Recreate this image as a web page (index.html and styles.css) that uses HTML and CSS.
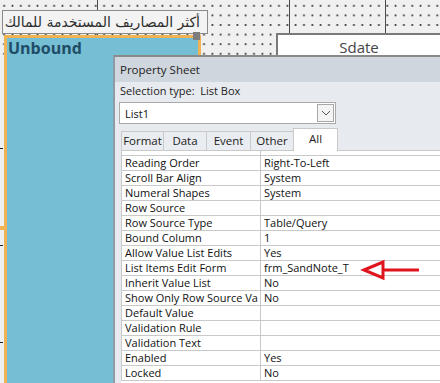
FILE: index.html
```html
<!DOCTYPE html>
<html lang="en">

<head>
  <meta charset="UTF-8">
  <meta name="viewport" content="width=device-width, initial-scale=1.0">
  <title>Property Sheet</title>
  <link rel="stylesheet" href="styles.css">
</head>

<body>
  <div class="designer">
    <div class="header-band"></div>
    <div class="guide guide-1"></div>
    <div class="guide guide-2"></div>
    <div class="guide guide-3"></div>

    <div class="ar-label" dir="rtl">أكثر المصاريف المستخدمة للمالك</div>
    <div class="unbound">Unbound</div>
    <div class="handle"></div>
    <div class="sdate">Sdate</div>

    <div class="tick tick-1"></div>
    <div class="tick tick-2"></div>
    <div class="tick tick-3"></div>
    <div class="side-grip"></div>
  </div>

  <div class="prop-sheet">
    <div class="ps-title">Property Sheet</div>
    <div class="ps-sel">Selection type:&nbsp;&nbsp;List Box</div>
    <div class="ps-combo">
      <span class="ps-combo-text">List1</span>
      <span class="ps-combo-btn">
        <svg width="10" height="6" viewBox="0 0 10 6"><path d="M1 1 L5 5 L9 1" fill="none" stroke="#555" stroke-width="1"/></svg>
      </span>
    </div>
    <div class="ps-tabs">
      <div class="tab">Format</div>
      <div class="tab">Data</div>
      <div class="tab">Event</div>
      <div class="tab">Other</div>
      <div class="tab active">All</div>
    </div>
    <div class="ps-grid">
      <div class="ps-rows">
        <div class="row"><div class="name"></div><div class="val"></div></div>
        <div class="row"><div class="name">Reading Order</div><div class="val">Right-To-Left</div></div>
        <div class="row"><div class="name">Scroll Bar Align</div><div class="val">System</div></div>
        <div class="row"><div class="name">Numeral Shapes</div><div class="val">System</div></div>
        <div class="row"><div class="name">Row Source</div><div class="val"></div></div>
        <div class="row"><div class="name">Row Source Type</div><div class="val">Table/Query</div></div>
        <div class="row"><div class="name">Bound Column</div><div class="val">1</div></div>
        <div class="row"><div class="name">Allow Value List Edits</div><div class="val">Yes</div></div>
        <div class="row"><div class="name">List Items Edit Form</div><div class="val">frm_SandNote_T</div></div>
        <div class="row"><div class="name">Inherit Value List</div><div class="val">No</div></div>
        <div class="row"><div class="name">Show Only Row Source Va</div><div class="val">No</div></div>
        <div class="row"><div class="name">Default Value</div><div class="val"></div></div>
        <div class="row"><div class="name">Validation Rule</div><div class="val"></div></div>
        <div class="row"><div class="name">Validation Text</div><div class="val"></div></div>
        <div class="row"><div class="name">Enabled</div><div class="val">Yes</div></div>
        <div class="row"><div class="name">Locked</div><div class="val">No</div></div>
      </div>
    </div>
  </div>

  <svg class="red-arrow" width="70" height="30" viewBox="0 0 70 30">
    <line x1="27" y1="15" x2="64" y2="15" stroke="#e0141c" stroke-width="3"/>
    <polygon points="9,15 28,7 28,23" fill="none" stroke="#e0141c" stroke-width="3" stroke-linejoin="miter"/>
  </svg>
</body>

</html>
```

FILE: styles.css
```css
body {
  margin: 0;
  width: 440px;
  height: 383px;
  overflow: hidden;
  position: relative;
  background-color: #f0f0f0;
  font-family: "Open Sans", "Noto Sans", sans-serif;
}

/* form design surface */
.designer {
  position: absolute;
  left: 0;
  top: 0;
  width: 440px;
  height: 383px;
  overflow: hidden;
}

.header-band {
  height: 55px;
  background-color: #f0f0f0;
  background-image: radial-gradient(circle, #3a3a3a 0.8px, transparent 1.2px);
  background-size: 8.33px 9.6px;
  background-position: 0 1px;
}

.guide {
  position: absolute;
  top: 0;
  width: 1px;
  height: 34px;
  background-color: #4a4a4a;
}

.guide-1 { left: 97px; height: 36px; }
.guide-2 { left: 289px; }
.guide-3 { left: 385px; }

.ar-label {
  position: absolute;
  left: 2px;
  top: 10px;
  width: 197px;
  height: 22px;
  border: 1px solid #8a8a8a;
  background-color: #f3f3f3;
  padding-right: 7px;
  font-family: "DejaVu Sans", sans-serif;
  font-size: 14px;
  line-height: 22px;
  color: #2e2e2e;
  text-align: right;
  white-space: nowrap;
  overflow: hidden;
}

.unbound {
  position: absolute;
  left: 4px;
  top: 35px;
  width: 190px;
  height: 345px;
  border: 3px solid #efb356;
  border-bottom: none;
  background-color: #76bed3;
  padding-left: 1px;
  font-size: 16px;
  font-weight: 700;
  line-height: 20px;
  color: #1f4c66;
}

.handle {
  position: absolute;
  left: 193px;
  top: 32px;
  width: 7px;
  height: 8px;
  background-color: #7d7d7d;
}

.sdate {
  position: absolute;
  left: 276px;
  top: 33px;
  width: 164px;
  height: 22px;
  border-left: 2px solid #7a7a7a;
  border-top: 2px solid #7a7a7a;
  background-color: #fff;
  box-sizing: border-box;
  padding-top: 2px;
  font-size: 15px;
  line-height: 20px;
  color: #444;
  text-align: center;
}

.tick {
  position: absolute;
  left: 0;
  width: 3px;
  height: 1px;
  background-color: #222;
}

.tick-1 { top: 148px; }
.tick-2 { top: 245px; }
.tick-3 { top: 342px; }

.side-grip {
  position: absolute;
  left: 0;
  top: 226px;
  width: 5px;
  height: 4px;
  background-color: #efb356;
}

/* floating property sheet */
.prop-sheet {
  position: absolute;
  left: 113px;
  top: 55px;
  width: 325px;
  height: 326px;
  border-left: 2px solid #8e9aa6;
  border-top: 2px solid #8a8a8a;
  background-color: #e7eaee;
  overflow: hidden;
}

.ps-title {
  height: 25px;
  padding-left: 5px;
  background-color: #d0d6dd;
  font-size: 11.5px;
  line-height: 25px;
  color: #222;
}

.ps-sel {
  height: 18px;
  padding-left: 5px;
  font-size: 11px;
  line-height: 18px;
  color: #222;
}

.ps-combo {
  display: flex;
  align-items: center;
  justify-content: space-between;
  box-sizing: border-box;
  width: 217px;
  height: 22px;
  margin: 2px 0 0 4px;
  border: 1px solid #a9a9a9;
  background-color: #fff;
  padding: 0 1px 0 5px;
  font-size: 11px;
  color: #111;
}

.ps-combo-btn {
  display: flex;
  align-items: center;
  justify-content: center;
  box-sizing: border-box;
  width: 17px;
  height: 18px;
  border: 1px solid #a8a8a8;
  background-color: #f4f4f4;
}

.ps-tabs {
  display: flex;
  align-items: flex-end;
  height: 22px;
  margin: 4px 0 0 6px;
  border-bottom: 1px solid #c9c9c9;
}

.tab {
  box-sizing: border-box;
  height: 19px;
  border: 1px solid #c9c9c9;
  border-right: none;
  border-bottom: none;
  background-color: #e9ecf0;
  font-size: 11.5px;
  line-height: 18px;
  text-align: center;
  color: #222;
}

.tab:nth-child(1) { width: 42px; }
.tab:nth-child(2) { width: 43px; }
.tab:nth-child(3) { width: 44px; }
.tab:nth-child(4) { width: 43px; }

.tab.active {
  width: 45px;
  height: 23px;
  margin-bottom: -1px;
  border-right: 1px solid #c9c9c9;
  background-color: #fff;
  line-height: 20px;
}

.ps-grid {
  height: 233px;
  margin-left: 6px;
  background-color: #fff;
  overflow: hidden;
}

.ps-rows {
  margin-top: -10px;
  border-left: 1px solid #c9c9c9;
}

.row {
  display: flex;
  box-sizing: border-box;
  height: 15px;
  border-bottom: 1px solid #c9c9c9;
  font-size: 11px;
  line-height: 14px;
  color: #111;
}

.name {
  box-sizing: border-box;
  width: 139px;
  padding-left: 3px;
  border-right: 1px solid #c9c9c9;
  white-space: nowrap;
  overflow: hidden;
}

.val {
  padding-left: 3px;
  white-space: nowrap;
}

.red-arrow {
  position: absolute;
  left: 355px;
  top: 255px;
}
```
